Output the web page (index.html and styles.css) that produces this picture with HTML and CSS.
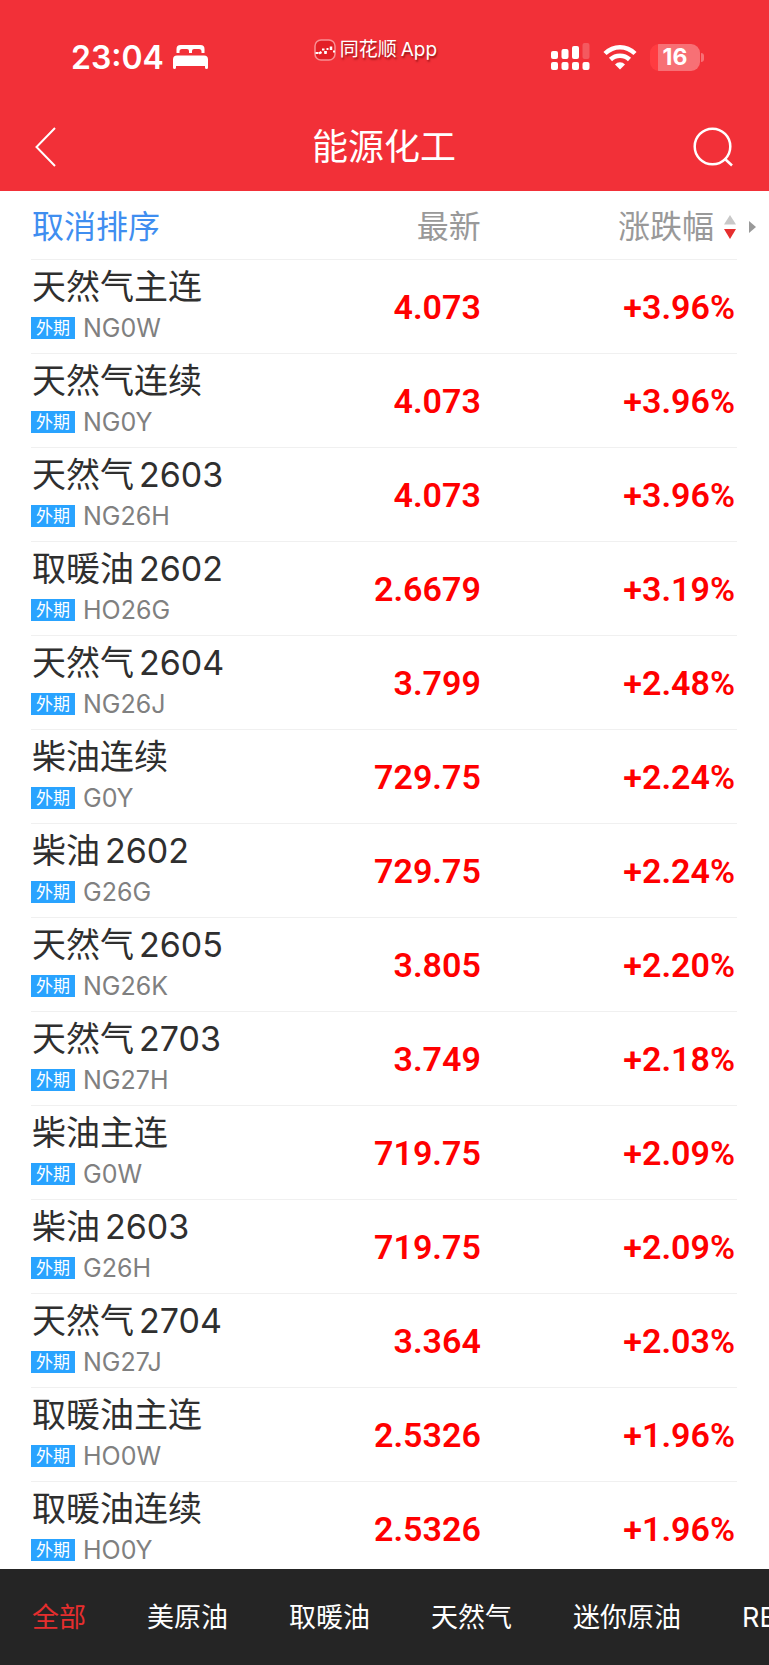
FILE: index.html
```html
<!DOCTYPE html>
<html lang="zh-CN">
<head>
<meta charset="utf-8">
<meta name="viewport" content="width=device-width, initial-scale=1">
<title>能源化工</title>
<link rel="stylesheet" href="styles.css">
</head>
<body>
<div class="app">
  <header class="header">
    <div class="status">
      <div class="status-left">
        <span class="time">23:04</span>
        <svg class="bed" width="35" height="24" viewBox="0 0 35 24" fill="#fff" aria-hidden="true">
          <path d="M3.500 8V4Q3.500 0 7.500 0H27.500Q31.500 0 31.500 4V8H28.500V6.500Q28.500 4 26 4H21Q19 4 19 6V8H16V6Q16 4 14 4H9Q6.500 4 6.500 6.500V8Z"/>
          <path d="M0 14.500Q0 10.500 4 10.500H31Q35 10.500 35 14.500V22.500Q35 24 33.500 24T32 22.500V21H3V22.500Q3 24 1.500 24T0 22.500Z"/>
        </svg>
      </div>
      <div class="brand">
        <svg width="22" height="22" viewBox="0 0 22 22" aria-hidden="true">
          <rect x="1" y="1" width="20" height="20" rx="6" fill="#e31f26" stroke="#f98f93" stroke-width="1.500"/>
          <path d="M1.500 14h3M8 10.500h2.500M10.500 13h2M12.500 10h2M19 12.500h2" stroke="#fff" stroke-width="2" fill="none"/>
          <path d="M5 14.500l2.500-1.500M11.500 12v3M17 7.500v3.500" stroke="#fff" stroke-width="2.500" fill="none"/>
        </svg>
        <span>同花顺</span><span>App</span>
      </div>
      <div class="status-right">
        <svg width="39" height="28" viewBox="0 0 39 28" fill="#fff" aria-hidden="true">
          <rect x="0" y="8" width="7" height="8" rx="2"/><rect x="10.500" y="6" width="7" height="10" rx="2"/><rect x="21" y="3" width="7" height="13" rx="2"/><rect x="31.500" y="0" width="7" height="16" rx="2" opacity=".2"/>
          <rect x="0" y="19" width="7" height="8" rx="2"/><rect x="10.500" y="19" width="7" height="8" rx="2"/><rect x="21" y="19" width="7" height="8" rx="2"/><rect x="31.500" y="19" width="7" height="8" rx="2"/>
        </svg>
        <svg width="34" height="26" viewBox="0 0 34 26" fill="none" stroke="#fff" stroke-width="4.500" aria-hidden="true">
          <path d="M2 9.500Q8.500 3.200 17 3.200T32 9.500"/><path d="M7.500 15.500Q11.500 11.700 17 11.700T26.500 15.500"/>
          <path d="M17 25.500l-5-5Q14 18.200 17 18.200T22 20.500Z" fill="#fff" stroke="none"/>
        </svg>
        <div class="battery"><span class="battery-body">16</span><span class="battery-tip"></span></div>
      </div>
    </div>
    <div class="titlebar">
      <button class="icon-button" type="button" aria-label="返回">
        <svg width="22" height="40" viewBox="0 0 22 40" fill="none" stroke="#fff" stroke-width="2" aria-hidden="true"><path d="M20 1L1.500 20L20 39"/></svg>
      </button>
      <h1 class="title">能源化工</h1>
      <button class="icon-button" type="button" aria-label="搜索">
        <svg width="40" height="40" viewBox="0 0 40 40" fill="none" stroke="#fff" stroke-width="2.500" aria-hidden="true"><circle cx="19.500" cy="19.500" r="17.800"/><path d="M31.500 31.500L39 38.500"/></svg>
      </button>
    </div>
  </header>
  <main class="content">
    <table class="quotes">
      <thead>
        <tr>
          <th class="col-name" scope="col"><button class="sort sort-reset" type="button">取消排序</button></th>
          <th class="col-price" scope="col"><button class="sort" type="button">最新</button></th>
          <th class="col-change" scope="col" aria-sort="descending"><button class="sort" type="button">涨跌幅<svg class="sort-icon" width="12" height="24" viewBox="0 0 12 24" aria-hidden="true"><path d="M6 0L12 9.500H0Z" fill="#c8c8c8"/><path d="M0 14H12L6 24Z" fill="#e62e2e"/></svg></button></th>
        </tr>
      </thead>
      <tbody>
        <tr><td><div class="name">天然气主连</div><div class="meta"><span class="tag">外期</span>NG0W</div></td><td class="num">4.073</td><td class="num">+3.96%</td></tr>
        <tr><td><div class="name">天然气连续</div><div class="meta"><span class="tag">外期</span>NG0Y</div></td><td class="num">4.073</td><td class="num">+3.96%</td></tr>
        <tr><td><div class="name">天然气<span class="term">2603</span></div><div class="meta"><span class="tag">外期</span>NG26H</div></td><td class="num">4.073</td><td class="num">+3.96%</td></tr>
        <tr><td><div class="name">取暖油<span class="term">2602</span></div><div class="meta"><span class="tag">外期</span>HO26G</div></td><td class="num">2.6679</td><td class="num">+3.19%</td></tr>
        <tr><td><div class="name">天然气<span class="term">2604</span></div><div class="meta"><span class="tag">外期</span>NG26J</div></td><td class="num">3.799</td><td class="num">+2.48%</td></tr>
        <tr><td><div class="name">柴油连续</div><div class="meta"><span class="tag">外期</span>G0Y</div></td><td class="num">729.75</td><td class="num">+2.24%</td></tr>
        <tr><td><div class="name">柴油<span class="term">2602</span></div><div class="meta"><span class="tag">外期</span>G26G</div></td><td class="num">729.75</td><td class="num">+2.24%</td></tr>
        <tr><td><div class="name">天然气<span class="term">2605</span></div><div class="meta"><span class="tag">外期</span>NG26K</div></td><td class="num">3.805</td><td class="num">+2.20%</td></tr>
        <tr><td><div class="name">天然气<span class="term">2703</span></div><div class="meta"><span class="tag">外期</span>NG27H</div></td><td class="num">3.749</td><td class="num">+2.18%</td></tr>
        <tr><td><div class="name">柴油主连</div><div class="meta"><span class="tag">外期</span>G0W</div></td><td class="num">719.75</td><td class="num">+2.09%</td></tr>
        <tr><td><div class="name">柴油<span class="term">2603</span></div><div class="meta"><span class="tag">外期</span>G26H</div></td><td class="num">719.75</td><td class="num">+2.09%</td></tr>
        <tr><td><div class="name">天然气<span class="term">2704</span></div><div class="meta"><span class="tag">外期</span>NG27J</div></td><td class="num">3.364</td><td class="num">+2.03%</td></tr>
        <tr><td><div class="name">取暖油主连</div><div class="meta"><span class="tag">外期</span>HO0W</div></td><td class="num">2.5326</td><td class="num">+1.96%</td></tr>
        <tr><td><div class="name">取暖油连续</div><div class="meta"><span class="tag">外期</span>HO0Y</div></td><td class="num">2.5326</td><td class="num">+1.96%</td></tr>
      </tbody>
    </table>
    <svg class="more" width="7" height="12" viewBox="0 0 7 12" aria-hidden="true"><path d="M0 0L7 6L0 12Z" fill="#999"/></svg>
  </main>
  <nav class="tabs">
    <button class="tab tab-active" type="button">全部</button>
    <button class="tab" type="button">美原油</button>
    <button class="tab" type="button">取暖油</button>
    <button class="tab" type="button">天然气</button>
    <button class="tab" type="button">迷你原油</button>
    <button class="tab" type="button">RB</button>
  </nav>
</div>
</body>
</html>
```
FILE: styles.css
```css
* { box-sizing: border-box; }
body {
  margin: 0;
  font-family: Inter, "Noto Sans CJK SC", sans-serif;
  color: #2f2f2f;
  background: #fff;
}
button {
  margin: 0;
  padding: 0;
  border: 0;
  background: none;
  font: inherit;
  color: inherit;
}
svg { display: block; flex: none; }
.app {
  display: flex;
  flex-direction: column;
  height: 100vh;
  overflow: hidden;
}
.header {
  flex: none;
  padding-bottom: 11px;
  background: #f23038;
  color: #fff;
}
.status {
  display: flex;
  align-items: center;
  justify-content: space-between;
  height: 114px;
  padding: 0 65px 0 71px;
}
.status-left { display: flex; align-items: center; gap: 9px; }
.time { padding-top: 2px; font-size: 32px; line-height: 40px; font-weight: 600; }
.brand {
  display: flex;
  align-items: center;
  gap: 4px;
  margin: 0 8px 14px 0;
  font-size: 19px;
  line-height: 24px;
  text-shadow: 1px 2px 2px rgba(90, 0, 0, .6);
}
.status-right { display: flex; align-items: center; gap: 13px; }
.battery { display: flex; align-items: center; gap: 1px; }
.battery-body {
  width: 50px;
  border-radius: 9px;
  background: linear-gradient(to right, #ff3b40 8px, #f77075 8px);
  font-size: 23px;
  line-height: 27px;
  font-weight: 700;
  text-align: center;
}
.battery-tip {
  width: 3px;
  height: 9px;
  border-radius: 0 3px 3px 0;
  background: #f77075;
}
.titlebar {
  display: flex;
  align-items: center;
  justify-content: space-between;
  height: 66px;
  padding: 0 36px 0 35px;
}
.icon-button { display: flex; width: 40px; }
.title { margin: 0; font-size: 36px; line-height: 44px; font-weight: 400; }
.content {
  position: relative;
  flex: 1;
  min-height: 0;
  padding: 0 32px 0 31px;
  overflow-y: auto;
  scrollbar-width: none;
}
.quotes {
  width: 100%;
  table-layout: fixed;
  border-spacing: 0;
}
.quotes th, .quotes td {
  padding: 0;
  border-bottom: 1px solid #f0f0f0;
  text-align: left;
}
.quotes th { height: 69px; padding-top: 4px; font-weight: 400; color: #999; }
.quotes td { height: 94px; }
.col-name { width: 38%; }
.col-price { width: 26%; }
.quotes .col-price, .quotes .col-change, .quotes .num { text-align: right; }
.quotes .col-price, .quotes .num { padding-right: 2px; }
.quotes .col-change { padding-right: 1px; }
.sort { font-size: 32px; line-height: 40px; }
.sort-reset { padding-left: 1px; color: #3f8ef0; }
.col-change .sort { display: inline-flex; align-items: center; gap: 10px; }
.more { position: absolute; top: 30px; right: 13px; }
.name {
  display: flex;
  gap: 5px;
  padding-left: 1px;
  font-size: 34px;
  line-height: 40px;
}
.meta {
  display: flex;
  align-items: center;
  gap: 8px;
  margin: 8px 0 5px;
  font-size: 25px;
  line-height: 26px;
  color: #808080;
}
.tag {
  padding: 0 5px;
  background: #29a3ff;
  color: #fff;
  font-size: 17px;
  line-height: 22px;
}
.quotes .num {
  font-family: Roboto, sans-serif;
  font-size: 34px;
  font-weight: 600;
  color: #f00;
}
.tabs {
  display: flex;
  align-items: center;
  flex: none;
  gap: 61px;
  height: 96px;
  padding: 2px 32px 0;
  overflow: hidden;
  background: #252525;
  color: #fff;
}
.tab { flex: none; font-size: 27px; line-height: 36px; }
.tab-active { color: #e62e2e; }
```
